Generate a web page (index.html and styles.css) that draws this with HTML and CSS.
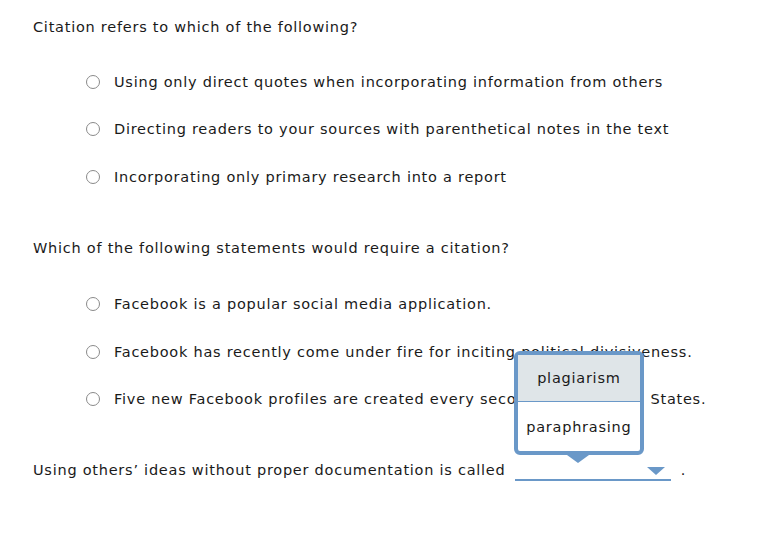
FILE: index.html
```html
<!DOCTYPE html>
<html>
<head>
<meta charset="utf-8">
<link rel="stylesheet" href="styles.css">
</head>
<body>
<div class="page">
  <section class="question">
    <p class="stem">Citation refers to which of the following?</p>
    <ul class="options">
      <li class="option"><span class="radio"></span><span>Using only direct quotes when incorporating information from others</span></li>
      <li class="option"><span class="radio"></span><span>Directing readers to your sources with parenthetical notes in the text</span></li>
      <li class="option"><span class="radio"></span><span>Incorporating only primary research into a report</span></li>
    </ul>
  </section>
  <section class="question second">
    <p class="stem">Which of the following statements would require a citation?</p>
    <ul class="options">
      <li class="option"><span class="radio"></span><span>Facebook is a popular social media application.</span></li>
      <li class="option"><span class="radio"></span><span>Facebook has recently come under fire for inciting political divisiveness.</span></li>
      <li class="option"><span class="radio"></span><span>Five new Facebook profiles are created every second in the United States.</span></li>
    </ul>
  </section>
  <section class="question fill">
    <p class="stem">Using others’ ideas without proper documentation is called
      <span class="select">
        <span class="caret"></span>
        <span class="menu">
          <span class="menu-item active">plagiarism</span>
          <span class="menu-item">paraphrasing</span>
          <span class="menu-tip"></span>
        </span>
      </span><span class="period">.</span>
    </p>
  </section>
</div>
</body>
</html>
```
FILE: styles.css
```css
html, body {
  margin: 0;
  padding: 0;
  background: #ffffff;
}
body {
  font-family: "DejaVu Sans", Verdana, sans-serif;
  font-size: 14.5px;
  letter-spacing: 0.75px;
  color: #1a1a1a;
}
.page {
  padding: 18px 33px 0 33px;
}
.stem {
  margin: 0;
  line-height: 18px;
}
.options {
  list-style: none;
  margin: 0;
  padding: 22px 0 0 53px;
}
.second .options {
  padding-top: 24px;
}
.option {
  display: flex;
  align-items: center;
  gap: 14px;
  height: 47.5px;
}
.second {
  margin-top: 38px;
}
.radio {
  width: 12px;
  height: 12px;
  border: 1px solid #8a8a8a;
  border-radius: 50%;
  flex: none;
}
.fill {
  margin-top: 36px;
}
.select {
  position: relative;
  display: inline-block;
  width: 156px;
  height: 20px;
  margin-left: 4px;
  border-bottom: 2px solid #6a98c8;
  vertical-align: -6px;
}
.caret {
  position: absolute;
  right: 6px;
  top: 8px;
  width: 0;
  height: 0;
  border-left: 9px solid transparent;
  border-right: 9px solid transparent;
  border-top: 8px solid #6a98c8;
}
.period {
  margin-left: 10px;
}
.menu {
  position: absolute;
  left: -1px;
  bottom: 24px;
  width: 122px;
  border: 4px solid #6a98c8;
  border-radius: 6px;
  background: #ffffff;
  display: flex;
  flex-direction: column;
}
.menu-item {
  display: flex;
  align-items: center;
  justify-content: center;
  height: 49px;
  color: #1a1a1a;
}
.menu-item.active {
  background: #dfe5e8;
  height: 46px;
  border-bottom: 1px solid #6a98c8;
}
.menu-tip {
  position: absolute;
  left: 49px;
  bottom: -12px;
  width: 0;
  height: 0;
  border-left: 11px solid transparent;
  border-right: 11px solid transparent;
  border-top: 8px solid #6a98c8;
}
```
